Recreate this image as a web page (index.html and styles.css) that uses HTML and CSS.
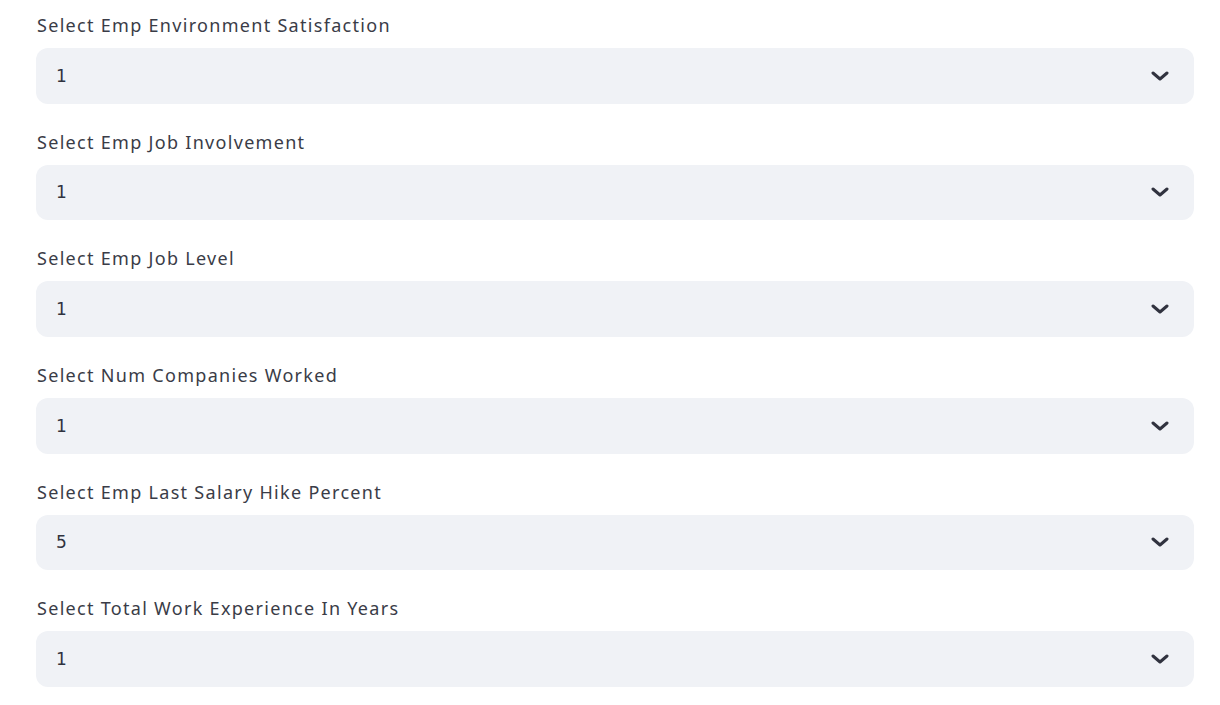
FILE: index.html
```html
<!DOCTYPE html>
<html>
<head>
<meta charset="utf-8">
<link rel="stylesheet" href="styles.css">
</head>
<body>
<div class="form">
  <div class="field">
    <label class="label">Select Emp Environment Satisfaction</label>
    <div class="select"><span class="value">1</span><svg class="chev" viewBox="0 0 18 10"><path d="M2 2 L9 8 L16 2" /></svg></div>
  </div>
  <div class="field">
    <label class="label">Select Emp Job Involvement</label>
    <div class="select"><span class="value">1</span><svg class="chev" viewBox="0 0 18 10"><path d="M2 2 L9 8 L16 2" /></svg></div>
  </div>
  <div class="field">
    <label class="label">Select Emp Job Level</label>
    <div class="select"><span class="value">1</span><svg class="chev" viewBox="0 0 18 10"><path d="M2 2 L9 8 L16 2" /></svg></div>
  </div>
  <div class="field">
    <label class="label">Select Num Companies Worked</label>
    <div class="select"><span class="value">1</span><svg class="chev" viewBox="0 0 18 10"><path d="M2 2 L9 8 L16 2" /></svg></div>
  </div>
  <div class="field">
    <label class="label">Select Emp Last Salary Hike Percent</label>
    <div class="select"><span class="value">5</span><svg class="chev" viewBox="0 0 18 10"><path d="M2 2 L9 8 L16 2" /></svg></div>
  </div>
  <div class="field">
    <label class="label">Select Total Work Experience In Years</label>
    <div class="select"><span class="value">1</span><svg class="chev" viewBox="0 0 18 10"><path d="M2 2 L9 8 L16 2" /></svg></div>
  </div>
</div>
</body>
</html>
```
FILE: styles.css
```css
html, body {
  margin: 0;
  padding: 0;
  background: #ffffff;
}
body {
  font-family: "Noto Sans", "Open Sans", sans-serif;
  color: #31333f;
}
.form {
  display: flex;
  flex-direction: column;
  gap: 26px;
  padding: 13px 26px 0 36px;
}
.field {
  display: flex;
  flex-direction: column;
}
.label {
  font-size: 18px;
  line-height: 24px;
  height: 24px;
  margin-bottom: 11px;
  padding-left: 1px;
  letter-spacing: 1.3px;
  color: #3a3c47;
}
.select {
  height: 55.67px;
  background: #f0f2f6;
  border-radius: 12px;
  display: flex;
  align-items: center;
  justify-content: space-between;
  padding: 0 25px 0 20px;
}
.value {
  font-family: "DejaVu Sans", "Noto Sans", sans-serif;
  font-size: 17px;
  color: #31333f;
}
.chev {
  width: 18px;
  height: 10px;
}
.chev path {
  fill: none;
  stroke: #31333f;
  stroke-width: 3;
  stroke-linecap: round;
  stroke-linejoin: round;
}
```
